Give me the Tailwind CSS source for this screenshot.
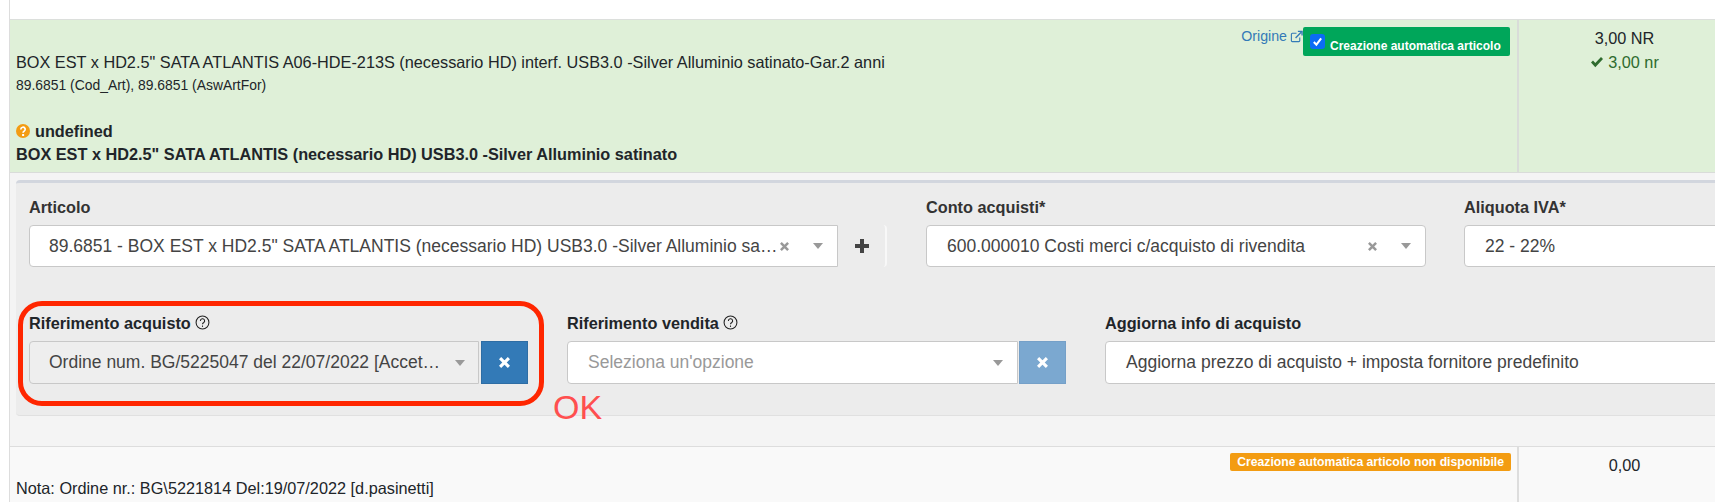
<!DOCTYPE html>
<html lang="it">
<head>
  <meta charset="UTF-8">
  <meta name="viewport" content="width=device-width, initial-scale=1.0">
  <title>Righe documento</title>
  <script src="https://cdn.jsdelivr.net/npm/@tailwindcss/browser@4"></script>
</head>
<body class="bg-white font-['Liberation_Sans',Arial,sans-serif] text-[16.27px] text-[#212529] overflow-hidden">
  <div class="relative w-[1715px] h-[502px] overflow-hidden pl-[9px]">
    <div class="border-l border-[#dddddd] h-full">
      <div class="h-[20px] border-b border-[#dcdfdc]"></div>

      <!-- riga verde -->
      <div class="flex h-[153px] bg-[#dff0d8] border-b border-[#d9dcd9]">
        <div class="relative w-[1507px] shrink-0 pl-[6px] pt-[32px]">
          <div class="absolute right-[7px] top-[7px] flex items-start">
            <a class="flex items-center gap-[3px] text-[14.2px] leading-[16px] text-[#337ab7] mt-[1px]">Origine
              <svg class="w-[13px] h-[13px]" viewBox="0 0 14 14" fill="none" stroke="#337ab7" stroke-width="1.2"><path d="M10.5 8v3.5a1 1 0 0 1-1 1H2.5a1 1 0 0 1-1-1v-7a1 1 0 0 1 1-1H7"/><path d="M6 8.5 12 2.5M8.5 1.5h4.5V6" stroke-width="1.5"/></svg>
            </a>
            <span class="flex items-center h-[29px] w-[207px] bg-[#00a65a] rounded-[2px] pl-[7px] text-white font-bold text-[12px]">
              <span class="flex items-center justify-center w-[15px] h-[15px] rounded-[3px] bg-[#0b6cf5] mr-[5px]">
                <svg class="w-[11px] h-[11px]" viewBox="0 0 12 12" fill="none" stroke="#fff" stroke-width="2.2"><path d="M2 6.5 4.8 9.5 10 2.5"/></svg>
              </span>
              <span class="mt-[8px]">Creazione automatica articolo</span>
            </span>
          </div>
          <div class="leading-[20px]">BOX EST x HD2.5" SATA ATLANTIS A06-HDE-213S (necessario HD) interf. USB3.0 -Silver Alluminio satinato-Gar.2 anni</div>
          <div class="text-[13.9px] leading-[16px] mt-[5px]">89.6851 (Cod_Art), 89.6851 (AswArtFor)</div>
          <div class="flex items-center gap-[5px] font-bold leading-[20px] mt-[28px]">
            <svg class="w-[14px] h-[14px]" viewBox="0 0 14 14"><circle cx="7" cy="7" r="7" fill="#f39c12"/><path d="M4.8 5.4a2.2 2.2 0 1 1 3.3 1.9c-.7.4-1 .8-1 1.5" fill="none" stroke="#fff" stroke-width="1.7"/><rect x="6.1" y="10" width="2" height="2" fill="#fff"/></svg>
            <span>undefined</span>
          </div>
          <div class="font-bold leading-[20px] mt-[3px]">BOX EST x HD2.5" SATA ATLANTIS (necessario HD) USB3.0 -Silver Alluminio satinato</div>
        </div>
        <div class="flex-1 border-l-2 border-[#d9dcd9] text-center pt-[8px] pl-[15px]">
          <div class="leading-[20px]">3,00 NR</div>
          <div class="leading-[20px] mt-[4px] text-[#2e6b2e] flex items-center justify-center gap-[4px]">
            <svg class="w-[14px] h-[12px]" viewBox="0 0 14 12"><path d="M1 6.5 3 4.5 5.3 7 11 1l2 2-7.7 8.2z" fill="#2e6b2e"/></svg>
            <span>3,00 nr</span>
          </div>
        </div>
      </div>

      <!-- pannello dettaglio -->
      <div class="bg-[#f4f4f4] h-[274px] pt-[7px] pl-[6px] border-b border-[#dddddd]">
        <div class="bg-[#ececec] h-[236px] rounded-tl-[4px] rounded-bl-[4px] border-t-[3px] border-b border-t-[#d2d6de] border-b-[#e0e0e0] pl-[13px] pt-[14px]">
          <div class="flex">
            <div class="w-[897px] shrink-0">
              <div class="font-bold text-[#333] leading-[20px] h-[28px]">Articolo</div>
              <div class="flex">
                <div class="w-[809px] h-[42px] flex items-center bg-white border border-[#c8c8c8] rounded-l-[4px] pl-[19px] pr-[14px] text-[17.5px] text-[#444]">
                  <span class="flex-1 truncate">89.6851 - BOX EST x HD2.5" SATA ATLANTIS (necessario HD) USB3.0 -Silver Alluminio sa…</span>
                  <svg class="w-[9px] h-[9px] mr-[24px]" viewBox="0 0 10 10" stroke="#999" stroke-width="2.8"><path d="M1 1 9 9M9 1 1 9"/></svg>
                  <svg class="w-[10px] h-[6px]" viewBox="0 0 10 6"><path d="M0 0h10L5 6z" fill="#999"/></svg>
                </div>
                <div class="w-[49px] h-[42px] flex items-center justify-center border-r-2 border-[#f8f8f8] rounded-r-[4px]">
                  <svg class="w-[14px] h-[14px]" viewBox="0 0 14 14"><path d="M5 0h4v5h5v4H9v5H5V9H0V5h5z" fill="#444"/></svg>
                </div>
              </div>
            </div>
            <div class="w-[538px] shrink-0">
              <div class="font-bold text-[#333] leading-[20px] h-[28px]">Conto acquisti*</div>
              <div class="w-[500px] h-[42px] flex items-center bg-white border border-[#c8c8c8] rounded-[4px] pl-[20px] pr-[14px] text-[17.5px] text-[#444]">
                <span class="flex-1 truncate">600.000010 Costi merci c/acquisto di rivendita</span>
                <svg class="w-[9px] h-[9px] mr-[24px]" viewBox="0 0 10 10" stroke="#999" stroke-width="2.8"><path d="M1 1 9 9M9 1 1 9"/></svg>
                <svg class="w-[10px] h-[6px]" viewBox="0 0 10 6"><path d="M0 0h10L5 6z" fill="#999"/></svg>
              </div>
            </div>
            <div class="w-[300px] shrink-0">
              <div class="font-bold text-[#333] leading-[20px] h-[28px]">Aliquota IVA*</div>
              <div class="w-[300px] h-[42px] flex items-center bg-white border border-[#c8c8c8] rounded-l-[4px] pl-[20px] text-[17.5px] text-[#444]">22 - 22%</div>
            </div>
          </div>

          <div class="flex mt-[46px]">
            <div class="w-[538px] shrink-0">
              <div class="flex gap-[4px] font-bold leading-[20px] h-[28px]">Riferimento acquisto
                <svg class="w-[15px] h-[15px] mt-[2px]" viewBox="0 0 14 14" fill="none" stroke="#222"><circle cx="7" cy="7" r="6"/><path d="M5 5.5a2 2 0 1 1 3 1.7c-.7.4-1 .7-1 1.4"/><path d="M7 9.8v1.3"/></svg>
              </div>
              <div class="flex gap-[2px]">
                <div class="w-[450px] h-[43px] flex items-center bg-[#eeeeee] border border-[#c8c8c8] rounded-l-[4px] pl-[19px] pr-[13px] text-[17.5px] text-[#444]">
                  <span class="flex-1 truncate">Ordine num. BG/5225047 del 22/07/2022 [Accet…</span>
                  <svg class="w-[10px] h-[6px]" viewBox="0 0 10 6"><path d="M0 0h10L5 6z" fill="#999"/></svg>
                </div>
                <div class="w-[47px] h-[43px] flex items-center justify-center bg-[#337ab7] border border-[#2e6da4]">
                  <svg class="w-[11px] h-[11px]" viewBox="0 0 10 10" stroke="#fff" stroke-width="2.8"><path d="M1 1 9 9M9 1 1 9"/></svg>
                </div>
              </div>
            </div>
            <div class="w-[538px] shrink-0">
              <div class="flex gap-[4px] font-bold leading-[20px] h-[28px]">Riferimento vendita
                <svg class="w-[15px] h-[15px] mt-[2px]" viewBox="0 0 14 14" fill="none" stroke="#222"><circle cx="7" cy="7" r="6"/><path d="M5 5.5a2 2 0 1 1 3 1.7c-.7.4-1 .7-1 1.4"/><path d="M7 9.8v1.3"/></svg>
              </div>
              <div class="flex gap-[1px]">
                <div class="w-[451px] h-[43px] flex items-center bg-white border border-[#c8c8c8] rounded-l-[4px] pl-[20px] pr-[14px] text-[17.5px] text-[#999]">
                  <span class="flex-1 truncate">Seleziona un'opzione</span>
                  <svg class="w-[10px] h-[6px]" viewBox="0 0 10 6"><path d="M0 0h10L5 6z" fill="#999"/></svg>
                </div>
                <div class="w-[47px] h-[43px] flex items-center justify-center bg-[#7ba8d0] border border-[#75a0c8]">
                  <svg class="w-[11px] h-[11px]" viewBox="0 0 10 10" stroke="#fff" stroke-width="2.8"><path d="M1 1 9 9M9 1 1 9"/></svg>
                </div>
              </div>
            </div>
            <div class="w-[620px] shrink-0">
              <div class="font-bold leading-[20px] h-[28px]">Aggiorna info di acquisto</div>
              <div class="w-[620px] h-[43px] flex items-center bg-white border border-[#c8c8c8] rounded-l-[4px] pl-[20px] text-[17.5px] text-[#444]">Aggiorna prezzo di acquisto + imposta fornitore predefinito</div>
            </div>
          </div>
        </div>
      </div>

      <!-- riga successiva -->
      <div class="flex h-[55px] bg-[#f9f9f9]">
        <div class="relative w-[1507px] shrink-0 pl-[6px] pt-[31px]">
          <span class="absolute right-[6px] top-[6px] h-[18px] px-[7px] flex items-center bg-[#f39c12] rounded-[2px] text-white font-bold text-[12.2px]">Creazione automatica articolo non disponibile</span>
          <div class="leading-[20px]">Nota: Ordine nr.: BG\5221814 Del:19/07/2022 [d.pasinetti]</div>
        </div>
        <div class="flex-1 border-l-2 border-[#dddddd] pt-[8px] pl-[15px] text-center">
          <div class="leading-[20px]">0,00</div>
        </div>
      </div>
    </div>

    <!-- annotazione -->
    <div class="absolute left-[18px] top-[301px] w-[526px] h-[105px] border-[5px] border-[#ff2600] rounded-[24px]"></div>
    <span class="absolute left-[553px] top-[388px] text-[34px] leading-[38px] text-[#ff4f4f]">OK</span>
  </div>
</body>
</html>
